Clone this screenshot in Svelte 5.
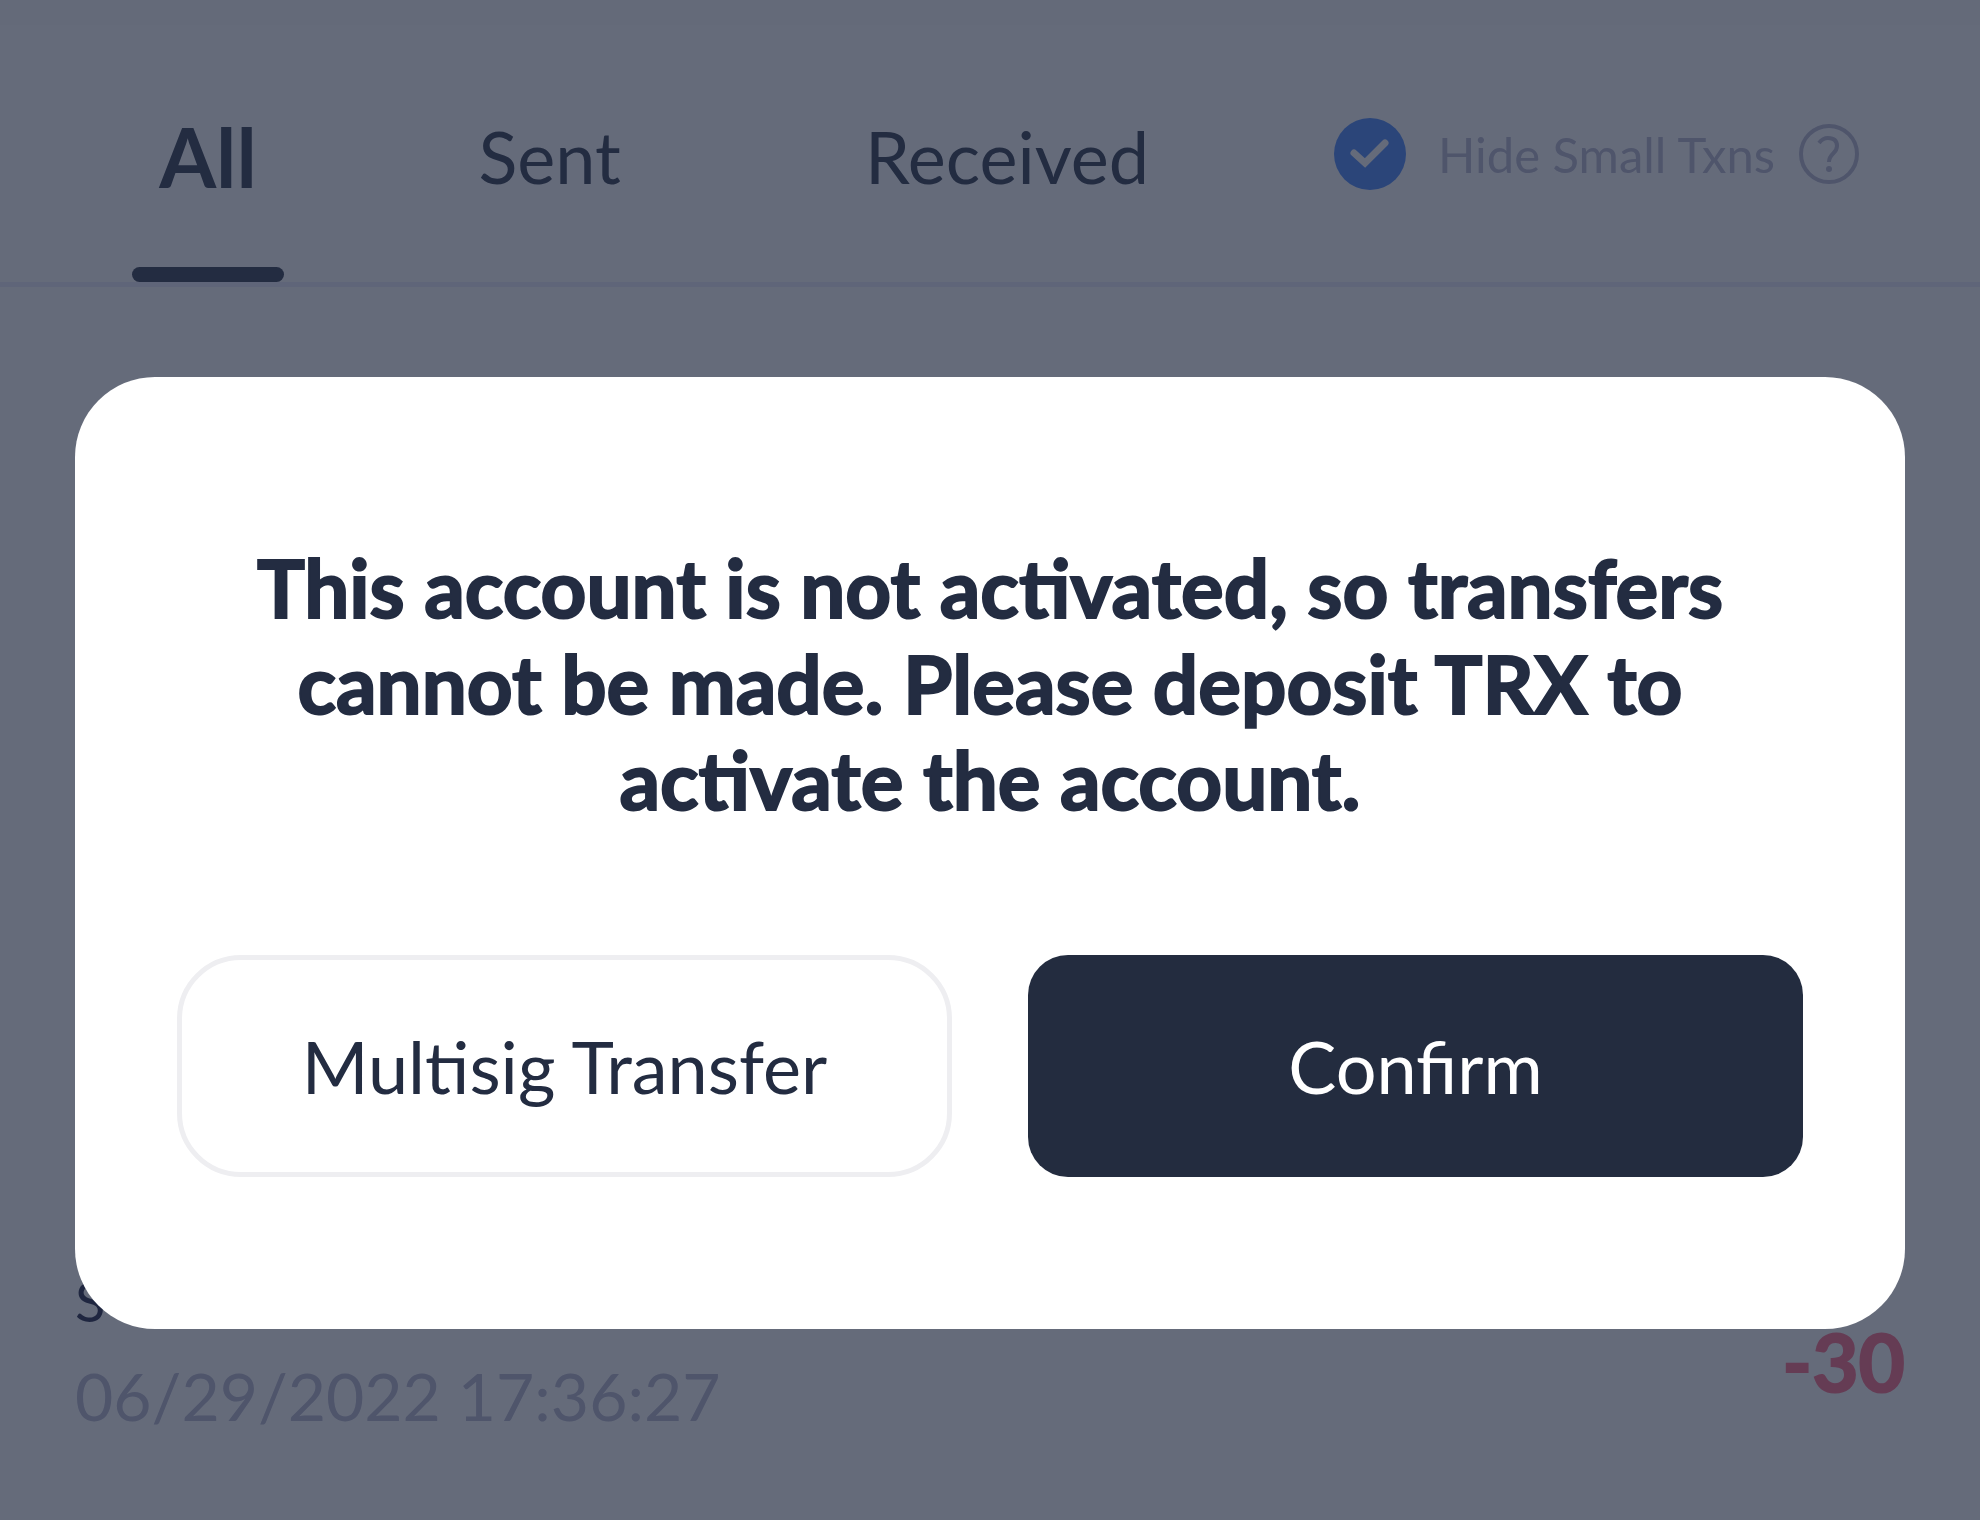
<script>
  let activeTab = $state("All");
  let hideSmall = $state(true);

  const tabs = ["All", "Sent", "Received"];

  const transactions = [
    { title: "S", time: "06/29/2022 17:36:27", amount: "-30" },
  ];
</script>

<div class="page">
  <header>
    <nav>
      {#each tabs as tab}
        <button class="tab" class:active={activeTab === tab} onclick={() => (activeTab = tab)}>
          {tab}
        </button>
      {/each}
    </nav>
    <div class="filter">
      <label>
        <span class="check">
          <input type="checkbox" bind:checked={hideSmall} />
          {#if hideSmall}
            <svg viewBox="0 0 72 72" aria-hidden="true">
              <path d="M20 35 L31 45 L51 25" fill="none" stroke="#fff" stroke-width="7" stroke-linecap="round" stroke-linejoin="miter" />
            </svg>
          {/if}
        </span>
        Hide Small Txns
      </label>
      <button class="help" aria-label="Help">
        <svg viewBox="0 0 60 60" fill="none" stroke="currentColor" stroke-width="4">
          <circle cx="30" cy="30" r="28" />
          <path d="M20 19 C23 15 26 14 29 14 C35 14 38 17 38 22 C38 30 30 29 30 38" />
          <circle cx="30" cy="45" r="3" fill="currentColor" stroke="none" />
        </svg>
      </button>
    </div>
  </header>

  <ul>
    {#each transactions as tx}
      <li>
        <div>
          <p class="title">{tx.title}</p>
          <p class="time">{tx.time}</p>
        </div>
        <span class="amount">{tx.amount}</span>
      </li>
    {/each}
  </ul>
</div>

<div class="overlay">
  <div class="modal" role="dialog" aria-modal="true" aria-labelledby="message">
    <h2 id="message">
      This account is not activated, so transfers cannot be made. Please deposit TRX to activate the account.
    </h2>
    <div class="actions">
      <button class="secondary">Multisig Transfer</button>
      <button class="primary">Confirm</button>
    </div>
  </div>
</div>

<style>
  :global(body) {
    margin: 0;
    background: #fff;
    font-family: Lato, "Open Sans", sans-serif;
    color: #232c41;
  }

  button {
    font: inherit;
    color: inherit;
    background: none;
    border: none;
    padding: 0;
    cursor: pointer;
  }

  header {
    display: flex;
    gap: 135px;
    box-sizing: border-box;
    height: 287px;
    padding: 0 121px 0 132px;
    border-top: 25px solid #fafbfc;
    border-bottom: 5px solid #eaeafb;
  }

  nav {
    flex: 1;
    display: grid;
    grid-template-columns: 152px 18fr 13fr;
  }

  .tab {
    display: flex;
    flex-direction: column;
    align-items: center;
    justify-content: space-between;
    font-size: 72px;
    line-height: 84px;
    padding-top: 89px;
  }

  .tab::after {
    content: "";
    width: 152px;
    height: 15px;
    border-radius: 8px;
  }

  .tab.active {
    font-size: 82px;
    font-weight: bold;
  }

  .tab.active::after {
    background: #232c41;
  }

  .filter {
    display: flex;
    align-items: center;
    gap: 24px;
    height: 258px;
    color: #b4b4cd;
  }

  label {
    display: flex;
    align-items: center;
    gap: 32px;
    font-size: 49px;
  }

  .check {
    position: relative;
    width: 72px;
    height: 72px;
  }

  .check input {
    display: block;
    appearance: none;
    box-sizing: border-box;
    width: 72px;
    height: 72px;
    margin: 0;
    border: 4px solid #b4b4cd;
    border-radius: 50%;
  }

  .check input:checked {
    border: none;
    background: #3c7ffc;
  }

  .check svg {
    position: absolute;
    inset: 0;
    pointer-events: none;
  }

  .help,
  .help svg {
    display: block;
    width: 60px;
    height: 60px;
  }

  ul {
    list-style: none;
    margin: 0;
    padding: 972px 75px 0;
  }

  li {
    display: flex;
    justify-content: space-between;
    align-items: flex-end;
  }

  p {
    margin: 0;
  }

  .title {
    font-size: 56px;
    line-height: 84px;
    color: #141a3c;
  }

  .time {
    font-size: 66px;
    line-height: 106px;
    color: #b4b4cd;
  }

  .amount {
    font-size: 80px;
    line-height: 176px;
    font-weight: bold;
    color: #ff6180;
    -webkit-text-stroke: 2px;
  }

  .overlay {
    position: fixed;
    inset: 0;
    padding: 377px 75px 0;
    background: rgba(35, 44, 65, 0.7);
  }

  .modal {
    padding: 162px 102px 152px;
    border-radius: 80px;
    background: #fff;
    text-align: center;
  }

  h2 {
    margin: 0 0 128px;
    padding: 0 60px;
    font-size: 80px;
    line-height: 96px;
    -webkit-text-stroke: 2px;
  }

  .actions {
    display: grid;
    grid-template-columns: 1fr 1fr;
    gap: 76px;
  }

  .actions button {
    height: 222px;
    font-size: 72px;
  }

  .secondary {
    border: 5px solid #eeeef1;
    border-radius: 64px;
  }

  .primary {
    border-radius: 40px;
    background: #232c3f;
    color: #fff;
  }
</style>
